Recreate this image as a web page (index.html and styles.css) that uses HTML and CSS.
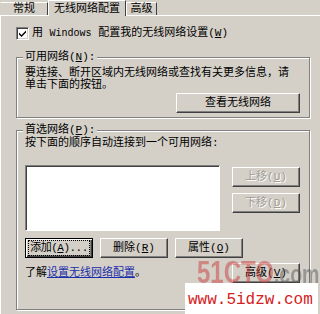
FILE: index.html
```html
<!DOCTYPE html>
<html>
<head>
<meta charset="utf-8">
<link rel="stylesheet" href="styles.css">
</head>
<body>
<div class="dialog">
  <div class="tabs">
    <div class="tab tab-general">常规</div>
    <div class="tab tab-wireless">无线网络配置</div>
    <div class="tab tab-adv">高级</div>
  </div>
  <div class="panel">
    <div class="check-row">
      <span class="checkbox"><svg width="9" height="9" viewBox="0 0 9 9"><path d="M1 3.5 L3.5 6 L8 1.5 L8 3.5 L3.5 8 L1 5.5 Z" fill="#000"/></svg></span>
      <span class="check-label">用 <span class="latin">Windows</span> 配置我的无线网络设置(<u>W</u>)</span>
    </div>
    <fieldset class="group g1">
      <legend>可用网络(<u>N</u>):</legend>
      <p class="desc">要连接、断开区域内无线网络或查找有关更多信息，请<br>单击下面的按钮。</p>
      <div class="row-right"><button class="btn btn-view">查看无线网络</button></div>
    </fieldset>
    <fieldset class="group g2">
      <legend>首选网络(<u>P</u>):</legend>
      <p class="desc1">按下面的顺序自动连接到一个可用网络:</p>
      <div class="list-row">
        <div class="listbox"></div>
        <div class="side-btns">
          <button class="btn disabled">上移(<u>U</u>)</button>
          <button class="btn disabled">下移(<u>D</u>)</button>
        </div>
      </div>
      <div class="btn-row">
        <button class="btn default"><span class="focus">添加(<u>A</u>)...</span></button>
        <button class="btn">删除(<u>R</u>)</button>
        <button class="btn">属性(<u>O</u>)</button>
      </div>
      <div class="foot-row">
        <span class="learn">了解<a class="link" href="#">设置无线网络配置</a>。</span>
        <button class="btn">高级(<u>V</u>)</button>
      </div>
    </fieldset>
  </div>
  <div class="wm-51">51CTO<span class="wm-com">.com</span></div>
  <div class="wm-site">www.5idzw.com</div>
</div>
</body>
</html>
```
FILE: styles.css
```css
* { box-sizing: border-box; }
html, body { margin: 0; padding: 0; }
body {
  width: 320px;
  height: 314px;
  overflow: hidden;
  background: #d4d0c8;
  font-family: "Liberation Mono", "Noto Sans CJK SC", monospace;
  font-size: 11px;
  line-height: 12px;
  color: #000;
}
.dialog { position: relative; width: 320px; height: 314px; }
.tabs { display: flex; align-items: flex-end; height: 15px; }
.tab {
  height: 13px;
  border-top: 1px solid #fff;
  border-left: 1px solid #fff;
  border-right: 1px solid #404040;
  display: flex;
  align-items: center;
  justify-content: center;
  background: #d4d0c8;
  white-space: nowrap;
}
.tab-general { width: 48px; border-left-color: #d4d0c8; }
.tab-wireless {
  width: 78px;
  height: 16px;
  margin-bottom: -1px;
  position: relative;
  z-index: 1;
}
.tab-adv { width: 31px; }
.panel {
  border-top: 1px solid #fff;
  border-left: 1px solid #fff;
  height: 299px;
  padding-left: 15px;
}
.check-row {
  display: flex;
  align-items: center;
  gap: 3px;
  margin-top: 11px;
  height: 13px;
  white-space: nowrap;
}
.checkbox {
  width: 13px;
  height: 13px;
  background: #fff;
  border: 1px solid;
  border-color: #808080 #fff #fff #808080;
  box-shadow: inset 1px 1px #404040, inset -1px -1px #d4d0c8;
  display: flex;
  align-items: center;
  justify-content: center;
}
.latin { font-family: "Liberation Mono", monospace; font-size: 10px; }
.group {
  margin: 0;
  width: 294px;
  min-width: 0;
  border: 1px solid #808080;
  box-shadow: inset 1px 1px #fff, 1px 1px #fff;
  padding: 0 9px 0 8px;
}
legend {
  padding: 0 2px;
  margin-left: -2px;
  line-height: 12px;
  background: #d4d0c8;
}
.g1 { margin-top: 11px; padding-top: 4px; padding-bottom: 4px; }
.desc { margin: 0; white-space: nowrap; }
.row-right { display: flex; justify-content: flex-end; margin-top: 2px; }
.btn {
  font: inherit;
  line-height: 12px;
  color: #000;
  background: #d4d0c8;
  height: 20px;
  padding: 0;
  border: 1px solid;
  border-color: #fff #404040 #404040 #fff;
  box-shadow: inset -1px -1px #808080;
  display: flex;
  align-items: center;
  justify-content: center;
  width: 68px;
  white-space: nowrap;
}
.btn-view { width: 124px; }
.btn.disabled { color: #a09c94; text-shadow: 1px 1px #fff; }
.btn.default {
  border-color: #000;
  box-shadow: inset 1px 1px #fff, inset -1px -1px #404040, inset -2px -2px #808080;
}
.focus { outline: 1px dotted #000; outline-offset: 1px; padding: 0; letter-spacing: -0.5px; }
.g2 { margin-top: 6px; padding-top: 1px; padding-bottom: 26px; }
.desc1 { margin: 0 0 16px; white-space: nowrap; }
.list-row { display: flex; justify-content: space-between; }
.listbox {
  width: 195px;
  height: 66px;
  background: #fff;
  border: 1px solid;
  border-color: #808080 #fff #fff #808080;
  box-shadow: inset 1px 1px #404040;
}
.side-btns { display: flex; flex-direction: column; gap: 6px; padding-top: 2px; }
.btn-row { display: flex; gap: 7px; margin-top: 7px; }
.foot-row {
  display: flex;
  justify-content: space-between;
  align-items: center;
  margin-top: 5px;
  white-space: nowrap;
}
.link { color: #1a2ea8; text-decoration: underline; }
.wm-51 {
  position: absolute;
  left: 197px;
  top: 256px;
  font-family: "Liberation Sans", sans-serif;
  font-weight: bold;
  font-size: 32px;
  line-height: 32px;
  color: rgba(200, 60, 60, 0.5);
  transform: scaleX(0.75);
  transform-origin: left top;
  white-space: nowrap;
}
.wm-com { color: rgba(90, 90, 90, 0.5); font-size: 26px; }
.wm-site {
  position: absolute;
  left: 185px;
  top: 283px;
  width: 133px;
  height: 31px;
  background: #fff;
  color: #d42020;
  font-family: "Liberation Mono", monospace;
  font-size: 16px;
  line-height: 16px;
  padding: 9px 0 0 3px;
  white-space: nowrap;
}
```
